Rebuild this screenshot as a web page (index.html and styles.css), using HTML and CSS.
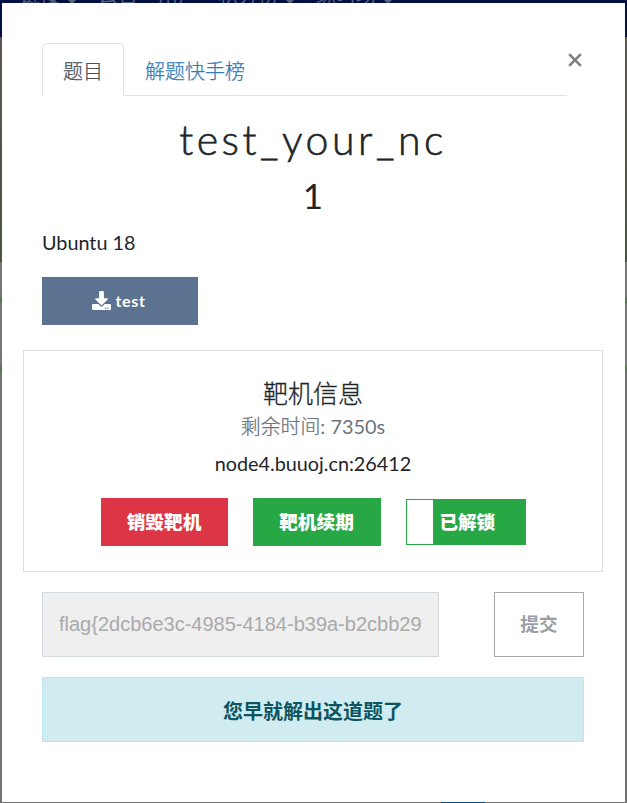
FILE: index.html
```html
<!DOCTYPE html>
<html lang="zh-CN">
<head>
<meta charset="utf-8">
<title>test_your_nc</title>
<link rel="stylesheet" href="styles.css">
</head>
<body>
<div class="backdrop">
  <div class="navbar" aria-hidden="true">
    <span class="menu">链接<i></i></span><span>公告</span><span>用户</span><span class="menu">积分榜<i></i></span><span class="menu">练习场<i></i></span>
  </div>
  <div class="hero"></div>
  <div class="board"></div>
  <div class="pager"></div>
</div>
<div class="modal">
  <div class="modal-head">
    <nav class="tabs">
      <a class="tab active">题目</a>
      <a class="tab">解题快手榜</a>
    </nav>
    <button class="close" aria-label="Close">
      <svg width="14" height="14" viewBox="0 0 14 14"><path d="M1.200 1.200 12.800 12.800M12.800 1.200 1.200 12.800"/></svg>
    </button>
  </div>
  <h2 class="title">test_your_nc</h2>
  <h3 class="points">1</h3>
  <p class="desc">Ubuntu 18</p>
  <a class="download">
    <svg width="19" height="19" viewBox="0 0 512 512"><path d="M216 0h80c13.300 0 24 10.700 24 24v168h87.700c17.800 0 26.700 21.500 14.100 34.100L269.700 378.300c-7.500 7.500-19.800 7.500-27.300 0L90.100 226.100c-12.600-12.600-3.700-34.100 14.100-34.100H192V24c0-13.300 10.700-24 24-24zm296 376v112c0 13.300-10.700 24-24 24H24c-13.300 0-24-10.700-24-24V376c0-13.300 10.700-24 24-24h146.700l49 49c20.100 20.100 52.500 20.100 72.600 0l49-49H488c13.300 0 24 10.700 24 24zm-124 88c0-11-9-20-20-20s-20 9-20 20 9 20 20 20 20-9 20-20zm64 0c0-11-9-20-20-20s-20 9-20 20 9 20 20 20 20-9 20-20z"/></svg>
    <span>test</span>
  </a>
  <section class="card">
    <h5 class="card-title">靶机信息</h5>
    <h6 class="card-time"><span class="thin">剩余时间</span>: 7350s</h6>
    <p class="card-host">node4.buuoj.cn:26412</p>
    <div class="actions">
      <button class="btn danger">销毁靶机</button>
      <button class="btn success">靶机续期</button>
      <div class="toggle"><span class="knob"></span><span class="toggle-label">已解锁</span></div>
    </div>
  </section>
  <div class="submit-row">
    <div class="flag">flag{2dcb6e3c-4985-4184-b39a-b2cbb29</div>
    <button class="submit">提交</button>
  </div>
  <div class="alert">您早就解出这道题了</div>
</div>
</body>
</html>
```
FILE: styles.css
```css
* { box-sizing: border-box; }
body {
  margin: 0;
  height: 803px;
  overflow: hidden;
  padding: 3px 2px 1px;
  font-family: Lato, "Noto Sans CJK SC", sans-serif;
  color: #212529;
}
h2, h3, h5, h6, p { margin: 0; font-weight: 400; }
button { font-family: inherit; padding: 0; }

.backdrop { position: absolute; inset: 0; z-index: -1; display: flex; flex-direction: column; background: #737373; overflow: hidden; }
.navbar { height: 37px; background: #031043; display: flex; gap: 20px; padding-left: 20px; font-size: 20px; line-height: 30px; color: #59617c; overflow: hidden; }
.navbar span { margin-top: -20px; white-space: nowrap; }
.navbar i { display: inline-block; margin-left: 6px; vertical-align: -1px; border: 6px solid transparent; border-top-color: #59617c; border-bottom: 0; }
.hero { height: 225px; background: linear-gradient(#5d5652, #4a5440); }
.board { flex: 1; background: linear-gradient(#777 36px, #567b53 36px 41px, #777 41px 104px, #567b53 104px 109px, #737373 109px); }
.pager { height: 1px; width: 44px; margin-left: 441px; background: #07427c; }

.modal { height: 799px; background: #fff; padding: 40px 41px 0 40px; display: flex; flex-direction: column; }
.modal-head { display: flex; height: 54px; }
.tabs { display: flex; width: 525px; height: 53px; border-bottom: 1px solid #dee2e6; font-size: 20px; line-height: 30px; }
.tab { height: 53px; padding: 12px 20px 0; border: 1px solid transparent; border-bottom: 0; color: #337ab7; font-weight: 300; -webkit-text-stroke: .25px; }
.tab.active { width: 82px; color: #495057; background: #fff; border-color: #dee2e6; border-radius: 5px 5px 0 0; }
.close { border: 0; background: none; width: 14px; height: 14px; margin: 10px 0 0 1px; }
.close svg { display: block; }
.close path { stroke: #7f7f7f; stroke-width: 2.6; fill: none; }

.title { margin-top: 17px; height: 52px; font-size: 41px; line-height: 52px; font-weight: 300; letter-spacing: 3.5px; text-align: center; -webkit-text-stroke: .6px; }
.points { height: 44px; margin-top: 7px; font-size: 35px; line-height: 44px; text-align: center; }
.desc { margin-top: 10px; font-size: 19.800px; line-height: 30px; }
.download { margin-top: 20px; width: 156px; height: 48px; background: #5b7290; color: #fff; display: flex; align-items: center; justify-content: center; gap: 4px; font-size: 16px; font-weight: 700; letter-spacing: .7px; flex-shrink: 0; padding: 0 2px 2px 0; }
.download path { fill: #fff; }

.card { width: 580px; height: 222px; margin: 25px 0 0 -19px; border: 1px solid #dfdfdf; padding-top: 24px; text-align: center; flex-shrink: 0; }
.card-title { font-size: 25px; line-height: 36px; font-weight: 300; -webkit-text-stroke: .3px; }
.card-time { font-size: 19.900px; line-height: 30px; color: #6c757d; }
.thin { font-weight: 300; -webkit-text-stroke: .25px; }
.card-host { font-size: 19.800px; line-height: 30px; margin-top: 7px; }
.actions { display: flex; justify-content: center; align-items: center; gap: 25px; margin-top: 20px; }
.btn { border: 0; height: 48px; padding-bottom: 3px; color: #fff; font-size: 18.700px; font-weight: 900; }
.danger { width: 127px; background: #dc3545; }
.success { width: 128px; background: #28a745; }
.toggle { width: 120px; height: 46px; background: #28a745; border: 1px solid #28a745; display: flex; align-items: center; color: #fff; font-size: 18.500px; font-weight: 900; }
.toggle-label { padding-bottom: 2px; }
.knob { width: 26px; height: 44px; background: #fff; margin-right: 7px; }

.submit-row { display: flex; justify-content: space-between; margin-top: 20px; width: 542px; height: 65px; }
.flag { width: 397px; border: 1px solid #d3d9de; background: #efefef; color: #aaa; padding-left: 16px; font: 20px/63px "Liberation Sans", sans-serif; white-space: nowrap; overflow: hidden; }
.submit { width: 90px; border: 1px solid #a5a9ad; background: #fff; color: #999fa5; padding-bottom: 4px; font-size: 18.700px; font-weight: 700; }
.alert { margin-top: 20px; width: 542px; height: 65px; border: 1px solid #bee5eb; background: #d1ecf1; color: #0c5460; font-size: 20px; line-height: 66px; font-weight: 700; text-align: center; }
```
